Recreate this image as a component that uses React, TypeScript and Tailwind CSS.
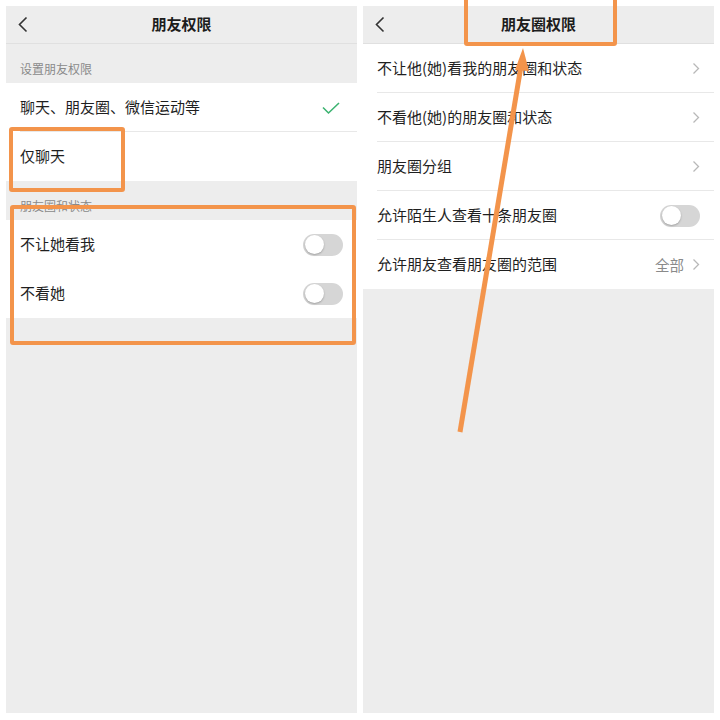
import React from "react";

const font = { fontFamily: '"Noto Sans CJK SC", "Noto Sans", sans-serif' };

function Header({ title }: { title: string }) {
  return (
    <div className="relative h-[38px] shrink-0 flex items-center justify-center bg-[#ededed] border-b border-[#e0e0e0]">
      <svg className="absolute left-[11px] top-[10px]" width="12" height="17" viewBox="0 0 12 17">
        <path d="M9.5 1.5 L2.5 8.5 L9.5 15.5" fill="none" stroke="#333" strokeWidth="1.6" />
      </svg>
      <span className="text-[15px] font-bold text-[#1c1c1c]">{title}</span>
    </div>
  );
}

function Toggle() {
  return (
    <div className="w-[40px] h-[22px] rounded-full bg-[#d6d6d6] p-[1.5px]">
      <div className="w-[19px] h-[19px] rounded-full bg-white shadow-[0_1px_2px_rgba(0,0,0,0.25)]" />
    </div>
  );
}

function Chevron() {
  return (
    <svg width="8" height="13" viewBox="0 0 8 13">
      <path d="M1.5 1.5 L6.5 6.5 L1.5 11.5" fill="none" stroke="#b8b8b8" strokeWidth="1.3" />
    </svg>
  );
}

function Row({ label, right, divider = true, inset = 14 }: { label: string; right?: React.ReactNode; divider?: boolean; inset?: number }) {
  return (
    <div className="relative h-[49px] bg-white flex items-center pl-[14px] pr-[14px]">
      <span className="flex-1 text-[15px] text-[#1f1f1f]">{label}</span>
      {right}
      {divider && <div className="absolute bottom-0 right-0 h-px bg-[#e8e8e8]" style={{ left: inset }} />}
    </div>
  );
}

export default function App() {
  return (
    <div className="relative w-[720px] h-[720px] bg-white overflow-hidden" style={font}>
      <div className="flex gap-[6px] pl-[6px] pt-[6px]">
        {/* ── Left phone ── */}
        <div className="w-[351px] h-[707px] bg-[#ededed] flex flex-col">
          <Header title="朋友权限" />
          <div className="h-[39px] flex items-end pb-[5px] pl-[14px] text-[12px] text-[#8a8a8a]">设置朋友权限</div>
          <Row
            label="聊天、朋友圈、微信运动等"
            right={
              <svg width="20" height="14" viewBox="0 0 20 14" className="mr-[2px]">
                <path d="M2 6.5 L7.5 12 L18 2" fill="none" stroke="#3cb371" strokeWidth="1.6" />
              </svg>
            }
          />
          <Row label="仅聊天" divider={false} />
          <div className="h-[39px] flex items-end pb-[5px] pl-[14px] text-[12px] text-[#8a8a8a]">朋友圈和状态</div>
          <Row label="不让她看我" right={<Toggle />} divider={false} />
          <Row label="不看她" right={<Toggle />} divider={false} />
        </div>

        {/* ── Right phone ── */}
        <div className="w-[351px] h-[707px] bg-[#ededed] flex flex-col">
          <Header title="朋友圈权限" />
          <Row label="不让他(她)看我的朋友圈和状态" right={<Chevron />} />
          <Row label="不看他(她)的朋友圈和状态" right={<Chevron />} />
          <Row label="朋友圈分组" right={<Chevron />} />
          <Row label="允许陌生人查看十条朋友圈" right={<Toggle />} />
          <Row
            label="允许朋友查看朋友圈的范围"
            divider={false}
            right={
              <div className="flex items-center gap-[8px]">
                <span className="text-[14.5px] text-[#8a8a8a]">全部</span>
                <Chevron />
              </div>
            }
          />
        </div>
      </div>

      {/* ── Annotations ── */}
      <div className="absolute left-[9px] top-[127px] w-[116px] h-[65px] border-[4px] border-[#f3944b] rounded-[3px]" />
      <div className="absolute left-[10px] top-[205px] w-[346px] h-[140px] border-[4px] border-[#f3944b] rounded-[3px]" />
      <div className="absolute left-[464px] top-[-4px] w-[153px] h-[50px] border-[4px] border-[#f3944b] rounded-[3px]" />
      <svg className="absolute left-0 top-0" width="720" height="720" viewBox="0 0 720 720">
        <line x1="460" y1="432" x2="521" y2="66" stroke="#f3944b" strokeWidth="5" />
        <path d="M523 48 L515 70 L529 71 Z" fill="#f3944b" />
      </svg>
    </div>
  );
}
